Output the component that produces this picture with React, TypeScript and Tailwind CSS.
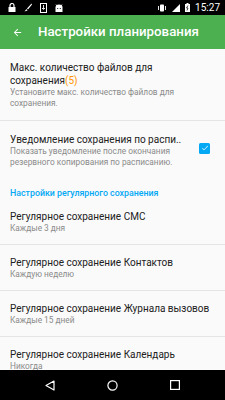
import React from "react";

const font = { fontFamily: "Roboto, 'Noto Sans', sans-serif" };

function StatusBar() {
  return (
    <div className="h-[15px] bg-black flex items-center justify-between pl-[8px] pr-[5px] text-white shrink-0">
      <div className="flex items-center gap-[8px]">
        {/* lock */}
        <svg width="8" height="9" viewBox="0 0 8 9">
          <path d="M2 4V2.5a2 2 0 0 1 4 0V4" stroke="white" strokeWidth="1.2" fill="none" />
          <rect x="0.5" y="4" width="7" height="5" fill="white" />
        </svg>
        {/* brush */}
        <svg width="8" height="9" viewBox="0 0 8 9">
          <path d="M7.5 0.5 3 5.5 4 6.5 8 1.5z" fill="white" />
          <path d="M2.5 6 0.5 8.5 3.5 7.5z" fill="white" />
        </svg>
        {/* download */}
        <svg width="7" height="10" viewBox="0 0 7 10">
          <rect x="0.5" y="0.5" width="6" height="9" stroke="white" fill="none" />
          <path d="M3.5 2v4M2 5l1.5 1.5L5 5" stroke="white" strokeWidth="0.9" fill="none" />
        </svg>
        {/* android */}
        <svg width="8" height="8" viewBox="0 0 8 8">
          <path d="M0.5 3.5a3.5 3 0 0 1 7 0V8h-7z" fill="white" />
          <circle cx="2.7" cy="4.5" r="0.6" fill="black" />
          <circle cx="5.3" cy="4.5" r="0.6" fill="black" />
          <path d="M1 0.5l1 1.5M7 0.5l-1 1.5" stroke="white" strokeWidth="0.8" />
        </svg>
      </div>
      <div className="flex items-center gap-[5px]">
        <svg width="10" height="8" viewBox="0 0 10 8">
          <rect x="3" y="0.5" width="4" height="7" rx="0.8" fill="white" />
          <path d="M1.5 2v4M8.5 2v4" stroke="white" strokeWidth="0.9" />
        </svg>
        <svg width="8" height="8" viewBox="0 0 8 8">
          <path d="M8 0V8H0z" fill="white" />
        </svg>
        <svg width="5" height="9" viewBox="0 0 5 9">
          <rect x="0" y="1" width="5" height="8" fill="white" />
          <rect x="1.5" y="0" width="2" height="1" fill="white" />
          <path d="M3 2.5 1.5 5h1.5L2 7.5" stroke="black" strokeWidth="0.7" fill="none" />
        </svg>
        <span className="text-[10px] leading-none" style={font}>15:27</span>
      </div>
    </div>
  );
}

function Item({ title, summary }: { title: string; summary: string }) {
  return (
    <div className="px-[10px] pt-[11px] pb-[10px] border-b border-[#e4e4e4] shrink-0">
      <div className="text-[10px] leading-[13px] text-[#212121] whitespace-nowrap">{title}</div>
      <div className="text-[8.3px] leading-[11px] text-[#8a8a8a]">{summary}</div>
    </div>
  );
}

export default function App() {
  return (
    <div className="w-[225px] h-[400px] bg-[#fafafa] flex flex-col overflow-hidden" style={font}>
      <StatusBar />
      <div className="h-[34px] bg-[#4caf50] flex items-center text-white shrink-0">
        <svg className="ml-[12px]" width="11" height="11" viewBox="0 0 24 24">
          <path d="M20 11H7.83l5.59-5.59L12 4l-8 8 8 8 1.41-1.41L7.83 13H20v-2z" fill="white" />
        </svg>
        <span className="ml-[15px] text-[13.3px] font-medium">Настройки планирования</span>
      </div>
      <div className="flex-1 flex flex-col overflow-hidden">
        <div className="px-[10px] pt-[12px] pb-[11px] border-b border-[#e4e4e4] shrink-0">
          <div className="text-[10px] leading-[13px] text-[#212121] pr-[40px]">
            Макс. количество файлов для сохранения<span className="text-[#ff9800]">(5)</span>
          </div>
          <div className="text-[8.3px] leading-[11px] text-[#8a8a8a] pr-[40px]">
            Установите макс. количество файлов для сохранения.
          </div>
        </div>
        <div className="px-[10px] pt-[12px] pb-[10px] flex items-center shrink-0">
          <div className="flex-1 min-w-0">
            <div className="text-[10px] leading-[13px] text-[#212121] whitespace-nowrap">Уведомление сохранения по распи..</div>
            <div className="text-[8.3px] leading-[10.5px] text-[#8a8a8a] pr-[12px]">
              Показать уведомление после окончания резервного копирования по расписанию.
            </div>
          </div>
          <div className="w-[11px] h-[11px] rounded-[1.5px] bg-[#03a9f4] flex items-center justify-center mr-[5px] mb-[4px] shrink-0">
            <svg width="8" height="8" viewBox="0 0 24 24">
              <path d="M9 16.2 4.8 12l-1.4 1.4L9 19 21 7l-1.4-1.4z" fill="white" />
            </svg>
          </div>
        </div>
        <div className="px-[10px] pt-[11px] text-[8.8px] leading-[11px] font-medium text-[#03a9f4] shrink-0">
          Настройки регулярного сохранения
        </div>
        <Item title="Регулярное сохранение СМС" summary="Каждые 3 дня" />
        <Item title="Регулярное сохранение Контактов" summary="Каждую неделю" />
        <Item title="Регулярное сохранение Журнала вызовов" summary="Каждые 15 дней" />
        <Item title="Регулярное сохранение Календарь" summary="Никогда" />
      </div>
      <div className="h-[30px] bg-black flex items-center shrink-0">
        <svg className="ml-[45px]" width="10" height="11" viewBox="0 0 10 11">
          <path d="M9 1 1 5.5 9 10z" stroke="white" strokeWidth="1.2" fill="none" strokeLinejoin="round" />
        </svg>
        <svg className="ml-[52px]" width="11" height="11" viewBox="0 0 11 11">
          <circle cx="5.5" cy="5.5" r="4.6" stroke="white" strokeWidth="1.2" fill="none" />
        </svg>
        <svg className="ml-[52px]" width="10" height="10" viewBox="0 0 10 10">
          <rect x="0.6" y="0.6" width="8.8" height="8.8" stroke="white" strokeWidth="1.2" fill="none" />
        </svg>
      </div>
    </div>
  );
}
